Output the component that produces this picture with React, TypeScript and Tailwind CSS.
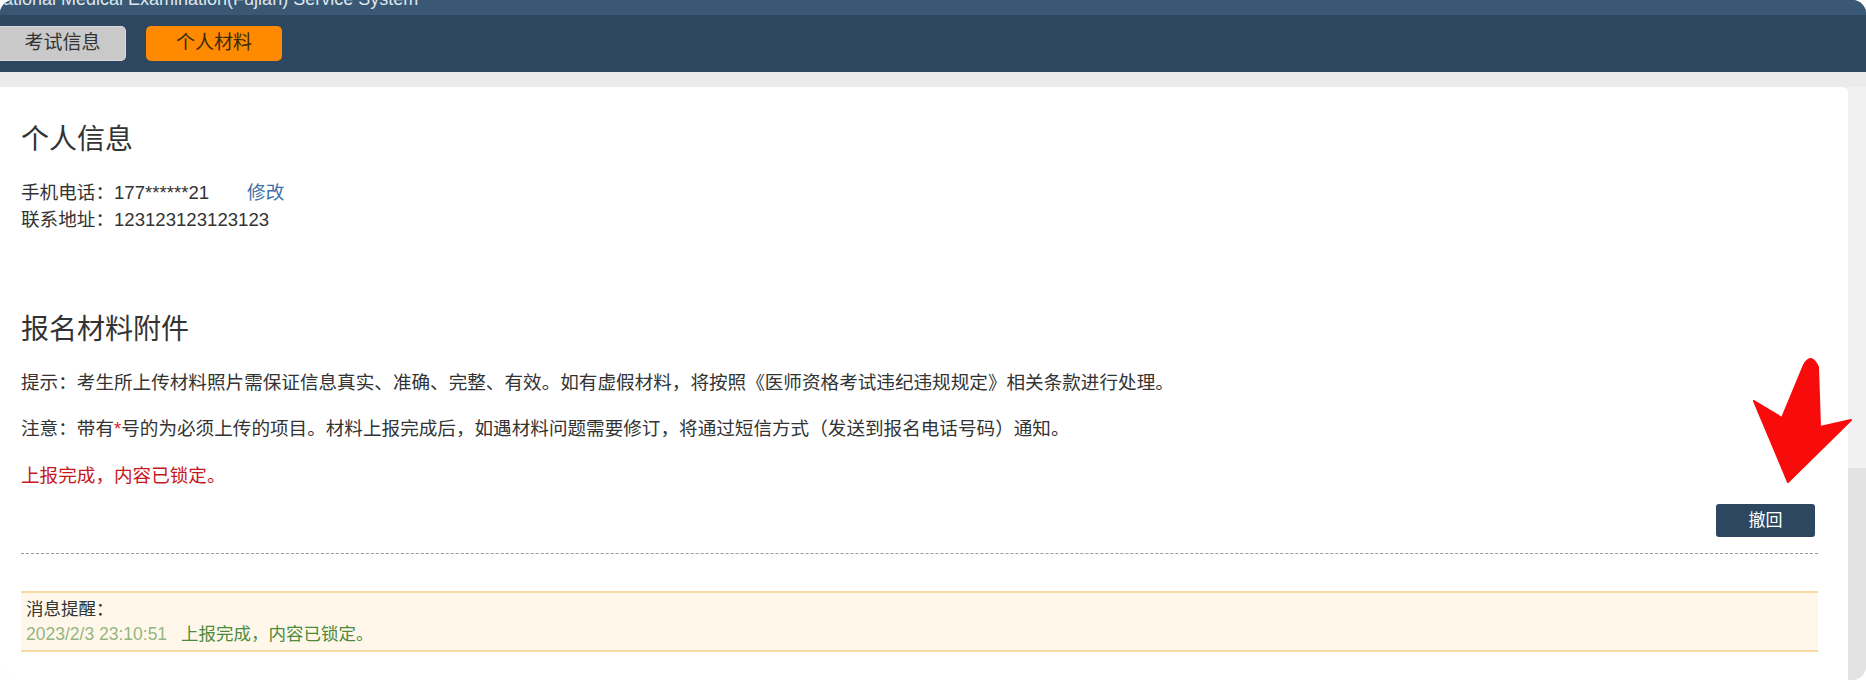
import React from "react";

function RedArrow() {
  return (
    <svg
      className="absolute left-[1745px] top-[263px] pointer-events-none"
      width="112"
      height="140"
      viewBox="0 0 112 140"
    >
      <path
        d="M59 15 Q66 2 73 17 L75 77 L106 70 L43 132 L9 51 L37 68 Z"
        fill="#f80b0b"
        stroke="#f80b0b"
        strokeWidth="2"
        strokeLinejoin="round"
      />
    </svg>
  );
}

export default function App() {
  return (
    <div className="w-[1866px] h-[680px] bg-white text-[#333] font-['Liberation_Sans','Noto_Sans_CJK_SC',sans-serif]">
      <div className="h-full rounded-[14px] overflow-hidden bg-[#efefef] flex flex-col">
        {/* top bar */}
        <header className="shrink-0 bg-[#2d4760]">
          <div className="h-[15px] bg-[#3a5874] overflow-hidden">
            <div className="-mt-[10px] -ml-[10px] text-[18px] leading-none text-[#dfe6ee] whitespace-nowrap">
              National Medical Examination(Fujian) Service System
            </div>
          </div>
          <nav className="h-[57px] flex items-center gap-[20px]">
            <button className="w-[126px] h-[35px] bg-[#c9c9c9] rounded-r-[5px] border border-l-0 border-[#dadada] text-[19px] text-[#333]">
              考试信息
            </button>
            <button className="w-[136px] h-[35px] bg-[#ff8a00] rounded-[5px] text-[19px] text-[#3b2a12]">
              个人材料
            </button>
          </nav>
        </header>
        <div className="h-[15px] shrink-0 bg-[#ebebeb]" />

        <div className="flex flex-1 min-h-0">
          <main className="relative flex-1 bg-white rounded-tr-[6px] pl-[21px] pr-[30px] pt-[35px]">
            <h2 className="text-[28px] leading-[36px]">个人信息</h2>
            <div className="mt-[21px] text-[18.6px] leading-[27px]">
              <div>
                手机电话：177******21
                <a className="ml-[38px] text-[#3d6fa8] cursor-pointer">修改</a>
              </div>
              <div>联系地址：123123123123123</div>
            </div>

            <h2 className="mt-[79px] text-[28px] leading-[36px]">报名材料附件</h2>
            <p className="mt-[21px] text-[18.6px] leading-[27px]">
              提示：考生所上传材料照片需保证信息真实、准确、完整、有效。如有虚假材料，将按照《医师资格考试违纪违规规定》相关条款进行处理。
            </p>
            <p className="mt-[19px] text-[18.6px] leading-[27px]">
              注意：带有<span className="text-[#e0202a]">*</span>号的为必须上传的项目。材料上报完成后，如遇材料问题需要修订，将通过短信方式（发送到报名电话号码）通知。
            </p>
            <p className="mt-[20px] text-[18.6px] leading-[27px] text-[#c8171e]">上报完成，内容已锁定。</p>

            <div className="mt-[15px] flex justify-end pr-[3px]">
              <button className="w-[99px] h-[33px] rounded-[3px] bg-[#2d4760] text-white text-[17px]">撤回</button>
            </div>

            <div className="mt-[16px] border-t border-dashed border-[#9a9a9a]" />

            <div className="mt-[37px] border-y-2 border-[#f8d9a2] bg-[#fff8ea] pl-[5px] pt-[4px] pb-[3px] text-[17.5px] leading-[25px]">
              <div>消息提醒：</div>
              <div className="text-[#4e8a3c]">
                <span className="opacity-60">2023/2/3 23:10:51</span>
                <span className="ml-[14px]">上报完成，内容已锁定。</span>
              </div>
            </div>

            <RedArrow />
          </main>
          <div className="w-[18px] flex flex-col">
            <div className="h-[381px] bg-[#f1f1f1]" />
            <div className="flex-1 bg-[#e3e3e3]" />
          </div>
        </div>
      </div>
    </div>
  );
}
